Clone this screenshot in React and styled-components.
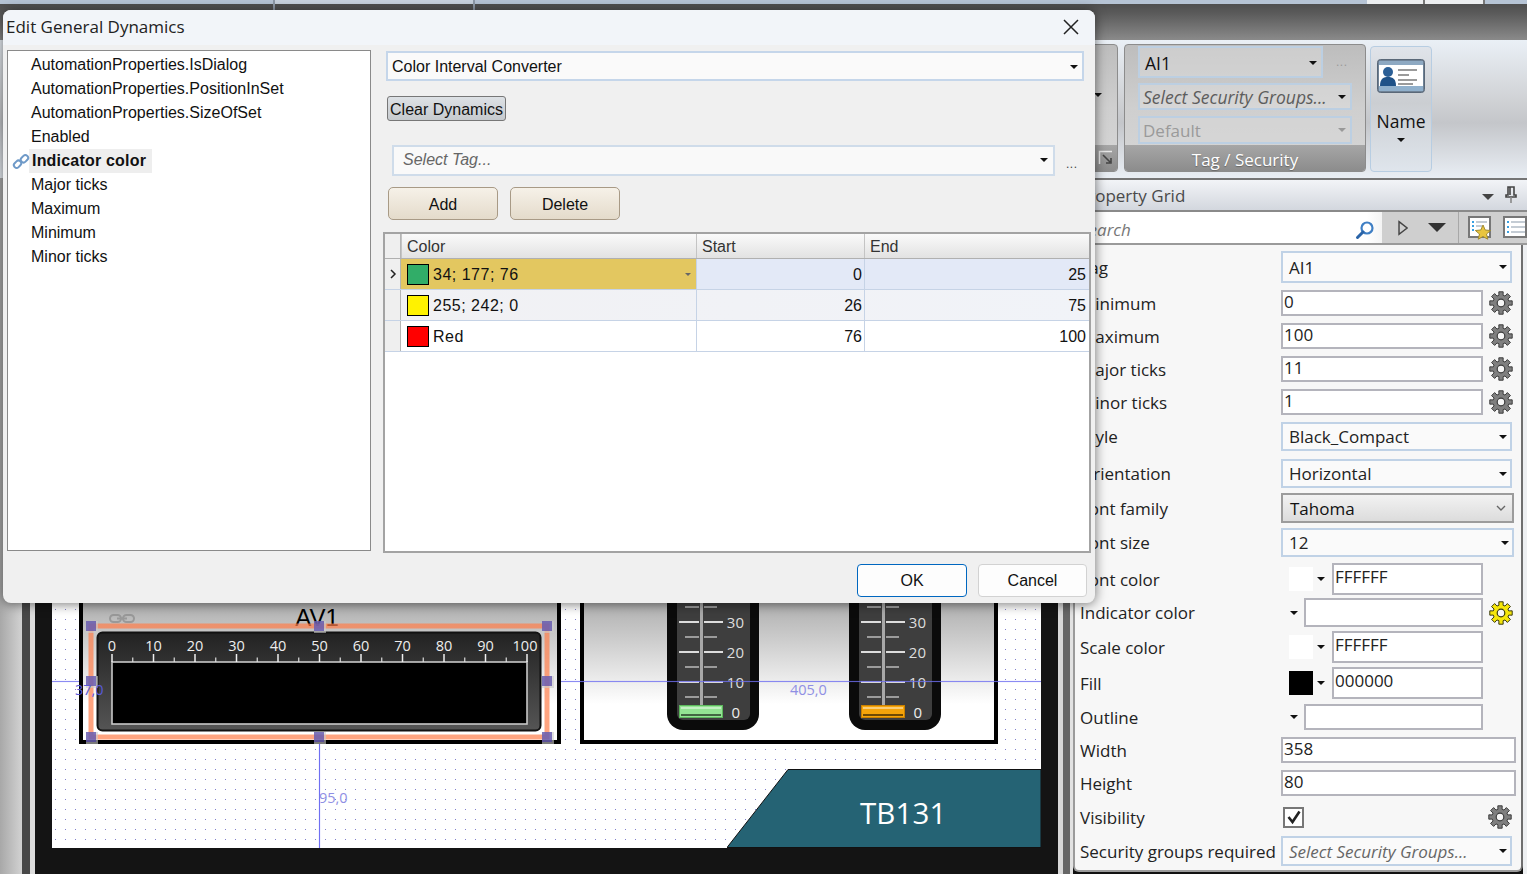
import styled, { createGlobalStyle } from "styled-components";

const UI_FONT = `"Open Sans", "Noto Sans", sans-serif`;
const ARIAL = `"Liberation Sans", Arial, sans-serif`;

const GlobalStyle = createGlobalStyle`
  html, body {
    margin: 0;
    padding: 0;
    background: #111;
    overflow: hidden;
  }
  * {
    box-sizing: border-box;
  }
`;

const Page = styled.div`
  position: relative;
  width: 1527px;
  height: 874px;
  overflow: hidden;
  display: flex;
  flex-direction: column;
  font-family: ${UI_FONT};
  color: #111;
`;

/* top window chrome */
const TopStrip = styled.div`
  height: 4px;
  display: flex;
  background: #b6c4d5;
`;

const TopTab = styled.div`
  width: ${(p) => p.$w}px;
  background: ${(p) => p.$bg || "#b6c4d5"};
  border-right: 2px solid ${(p) => p.$line || "#8d98a6"};
`;

const TitleBand = styled.div`
  height: 36px;
  display: flex;
  background: linear-gradient(#4f4f4f, #5a5a5a 25%, #8a8a8a);
`;

const TitleCell = styled.div`
  width: ${(p) => p.$w}px;
  border-right: 2px solid #8f9aa8;
`;

/* ribbon */
const Ribbon = styled.div`
  height: 138px;
  display: flex;
  align-items: flex-start;
  gap: 6px;
  padding: 4px 0 0 800px;
  background: linear-gradient(#eaf0f6, #cfd1d4 45%, #c4c6ca 60%, #e9eef4 100%);
`;

const GroupBox = styled.div`
  height: 128px;
  width: ${(p) => p.$w}px;
  display: flex;
  flex-direction: column;
  border: 1px solid #8c8c8c;
  border-radius: 4px;
  overflow: hidden;
  background: linear-gradient(#bdbdbd, #cfcfcf 50%, #d6d6d6);
`;

const GroupBody = styled.div`
  flex: 1;
  display: flex;
  flex-direction: column;
  align-items: ${(p) => (p.$end ? "flex-end" : "flex-start")};
  justify-content: ${(p) => (p.$end ? "center" : "flex-start")};
  padding: ${(p) => (p.$end ? "0 15px 0 0" : "1px 0 0 13px")};
`;

const GroupFooter = styled.div`
  height: 26px;
  display: flex;
  align-items: center;
  justify-content: ${(p) => (p.$end ? "flex-end" : "center")};
  padding: ${(p) => (p.$end ? "0 3px 0 0" : "2px 0 0 0")};
  background: linear-gradient(#a6a6a6, #8c8c8c);
  color: #fff;
  font-size: 17px;
  text-shadow: 0 1px 1px #666;
`;

const ComboRow = styled.div`
  display: flex;
  align-items: center;
  gap: 13px;
  margin-bottom: ${(p) => p.$gap || 0}px;
`;

const RibbonCombo = styled.div`
  width: ${(p) => p.$w}px;
  height: ${(p) => p.$h}px;
  display: flex;
  align-items: center;
  justify-content: space-between;
  padding: ${(p) => p.$pt || 0}px 4px 0 ${(p) => p.$pl || 3}px;
  border: 2px solid #bccfe2;
  font-size: ${(p) => (p.$off ? 17 : 17.5)}px;
  font-style: ${(p) => (p.$hint ? "italic" : "normal")};
  color: ${(p) => (p.$off ? "#9a9a9a" : p.$hint ? "#5d5d5d" : "#111")};
  background: ${(p) => (p.$off ? "rgba(215,215,215,.5)" : "rgba(225,225,225,.45)")};
  white-space: nowrap;
`;

const Caret = styled.span`
  flex: none;
  width: 0;
  height: 0;
  border-left: ${(p) => p.$size || 4}px solid transparent;
  border-right: ${(p) => p.$size || 4}px solid transparent;
  border-top: ${(p) => p.$size || 4}px solid ${(p) => p.$color || "#111"};
`;

const Ellipsis = styled.span`
  font-size: 12px;
  line-height: 1;
  color: ${(p) => p.$color || "#444"};
  letter-spacing: 0.5px;
  font-family: ${ARIAL};
`;

const NameButton = styled.div`
  margin: 2px 0 0 -2px;
  width: 62px;
  height: 126px;
  display: flex;
  flex-direction: column;
  align-items: center;
  padding-top: 12px;
  border: 1px solid #b7cde2;
  border-radius: 4px;
  font-size: 17.5px;
  background: linear-gradient(#e0e4ea, #cbced2 45%, #dfe5ec);
`;

const NameLabel = styled.div`
  margin: 12px 0 3px;
  line-height: 28px;
`;

/* work area */
const Workspace = styled.div`
  height: 696px;
  display: flex;
`;

const EditorArea = styled.div`
  width: 1073px;
  display: flex;
`;

const Gutter = styled.div`
  width: 22px;
  background: linear-gradient(90deg, #a8a8a8, #d2d2d2);
`;

const Strip = styled.div`
  width: ${(p) => p.$w}px;
  background: ${(p) => p.$c};
`;

const CanvasFrame = styled.div`
  flex: 1;
  padding: 0 17px 26px;
  background: #141414;
`;

const Canvas = styled.div`
  position: relative;
  height: 100%;
  overflow: hidden;
  background-color: #fff;
  background-image: radial-gradient(circle at 3.5px 1.5px, #8080cc 0.7px, transparent 0.95px);
  background-size: 10px 10px;
`;

const PanelFrame = styled.div`
  position: absolute;
  left: ${(p) => p.$x}px;
  width: ${(p) => p.$w}px;
  top: 362px;
  height: 204px;
  border: 4px solid #000;
  background: linear-gradient(#909090, #b8b8b8 70px, #fff 160px);
`;

const Drawing = styled.svg`
  position: absolute;
  left: ${(p) => p.$x}px;
  top: ${(p) => p.$y}px;
  overflow: visible;
`;

const GuideV = styled.div`
  position: absolute;
  left: 267px;
  top: 400px;
  bottom: 0;
  width: 1px;
  background: #6f6ff2;
  box-shadow: 0 0 1px rgba(110, 110, 255, 0.8);
`;

const GuideH = styled.div`
  position: absolute;
  left: 0;
  right: 0;
  top: 503px;
  height: 1px;
  background: rgba(110, 110, 240, 0.8);
  box-shadow: 0 0 1px rgba(110, 110, 255, 0.6);
`;

const GuideText = styled.span`
  position: absolute;
  left: ${(p) => p.$x}px;
  top: ${(p) => p.$y}px;
  font-size: 14.5px;
  line-height: 18px;
  color: ${(p) => p.$c || "#8f8fe4"};
`;

const Banner = styled.div`
  position: absolute;
  left: 675px;
  right: 0;
  top: 591px;
  height: 79px;
  display: flex;
  align-items: center;
  padding: 7px 0 0 133px;
  color: #fff;
  font-size: 29.5px;
  letter-spacing: 0.1px;
`;

const BannerShape = styled.svg`
  position: absolute;
  inset: 0;
  width: 100%;
  height: 100%;
`;

const BannerLabel = styled.span`
  position: relative;
`;

/* property grid */
const PropertyPanel = styled.div`
  flex: 1;
  display: flex;
  flex-direction: column;
  min-width: 0;
`;

const PropertyHeader = styled.div`
  height: 34px;
  display: flex;
  align-items: center;
  justify-content: space-between;
  padding: 0 10px 0 5px;
  border-top: 2px solid #757575;
  border-bottom: 2px solid #8a8a8a;
  font-size: 17px;
  color: #4a4a4a;
  background: linear-gradient(#f2f4f7, #d3d7de);
`;

const HeaderIcons = styled.div`
  display: flex;
  align-items: center;
  gap: 11px;
`;

const HeaderCaret = styled(Caret)`
  margin-top: 4px;
`;

const SearchRow = styled.div`
  height: 33px;
  display: flex;
  border-bottom: 2px solid #9a9a9a;
  background: #cfcfcf;
`;

const SearchBox = styled.div`
  width: 309px;
  display: flex;
  align-items: center;
  justify-content: space-between;
  padding: 4px 7px 0 7px;
  background: linear-gradient(90deg, #fff, #fff 95%, #f4f4f4);
  font-size: 17px;
  font-style: italic;
  color: #777;
`;

const SearchTools = styled.div`
  flex: 1;
  display: flex;
  align-items: center;
  padding-left: 16px;
  overflow: hidden;
`;

const ToolCaret = styled(Caret)`
  margin-left: 20px;
`;

const ToolSeparator = styled.div`
  width: 1px;
  height: 100%;
  margin: 0 9px 0 12px;
  background: #a8a8a8;
`;

const ToolIcon = styled.div`
  flex: none;
  display: flex;
  margin-right: ${(p) => p.$mr || 0}px;
`;

const PropertyBody = styled.div`
  flex: 1;
  display: flex;
`;

const PropertyList = styled.div`
  flex: 1;
  margin-bottom: 2px;
  padding: 6px 7px 0 5px;
  border: solid #9b9b9b;
  border-width: 0 2px 2px 2px;
  border-right-color: #6f6f6f;
  border-radius: 0 0 6px 6px;
  background: #f7f7f7;
`;

const ScrollEdge = styled.div`
  width: 4px;
  background: #eef0f2;
`;

const Row = styled.div`
  height: ${(p) => p.$h}px;
  margin-bottom: ${(p) => p.$gap}px;
  display: grid;
  grid-template-columns: 201px 1fr;
  align-items: center;
`;

const RowLabel = styled.div`
  font-size: 17px;
  color: #222;
  white-space: nowrap;
`;

const Value = styled.div`
  height: 100%;
  display: flex;
  align-items: center;
  min-width: 0;
`;

const Input = styled.div`
  flex: none;
  width: ${(p) => p.$w || 235}px;
  margin-left: ${(p) => p.$ml || 0}px;
  height: 100%;
  padding: 0 1px;
  border: 2px solid #b4b4bc;
  background: #fff;
  font-size: 17px;
  line-height: ${(p) => p.$lh || 20}px;
  color: #222;
`;

const Combo = styled.div`
  width: ${(p) => p.$w || 231}px;
  height: 100%;
  display: flex;
  align-items: center;
  justify-content: space-between;
  padding: 0 3px 0 6px;
  border: 2px solid #c0d2e6;
  background: #fafafa;
  font-size: 17px;
  font-style: ${(p) => (p.$hint ? "italic" : "normal")};
  color: ${(p) => (p.$hint ? "#666" : "#222")};
  white-space: nowrap;
`;

const FontCombo = styled(Combo)`
  width: 235px;
  padding-left: 7px;
  padding-right: 6px;
  border-color: #9c9c9c;
  background: linear-gradient(#f2f2f2, #dcdcdc);
  color: #111;
`;

const Swatch = styled.div`
  flex: none;
  width: 24px;
  height: 24px;
  margin: 0 2px 0 8px;
  background: ${(p) => p.$c};
`;

const GearSlot = styled.div`
  flex: none;
  width: 31px;
  display: flex;
  justify-content: flex-end;
  padding-right: 1px;
`;

const CaretSlot = styled.div`
  flex: none;
  width: 12px;
  margin-right: ${(p) => p.$mr || 0}px;
  margin-left: ${(p) => p.$ml || 0}px;
  display: flex;
  justify-content: center;
`;

const Check = styled.div`
  flex: none;
  width: 21px;
  height: 21px;
  margin-left: 2px;
  margin-right: 178px;
  display: flex;
  align-items: center;
  justify-content: center;
  border: 2px solid #777;
  background: #fff;
`;

/* dialog */
const Dialog = styled.div`
  position: absolute;
  left: 3px;
  top: 10px;
  width: 1092px;
  height: 593px;
  display: flex;
  flex-direction: column;
  overflow: hidden;
  border-radius: 8px;
  background: #f0f0f0;
  box-shadow: 0 1px 12px rgba(0, 0, 0, 0.55);
`;

const DialogTitle = styled.div`
  height: 35px;
  flex: none;
  display: flex;
  align-items: center;
  justify-content: space-between;
  padding: 0 15px 2px 3px;
  font-size: 17px;
  color: #222;
  background: #f2f5f9;
`;

const DialogBody = styled.div`
  height: 508px;
  flex: none;
  display: flex;
  gap: 12px;
  padding: 5px 4px 0;
`;

const PropertyNames = styled.div`
  width: 364px;
  height: 501px;
  flex: none;
  padding: 2px 0 0 2px;
  border: 1px solid #8a8a8a;
  background: #fff;
`;

const NameRow = styled.div`
  position: relative;
  height: 24px;
  padding-left: 21px;
  display: flex;
  align-items: center;
  font-family: ${ARIAL};
  font-size: 16px;
  color: #111;
`;

const NameText = styled.span`
  padding: 0 6px 0 ${(p) => (p.$on ? "3px" : "0")};
  margin-left: ${(p) => (p.$on ? "-2px" : "0")};
  line-height: 24px;
  font-weight: ${(p) => (p.$on ? 700 : 400)};
  letter-spacing: ${(p) => (p.$on ? "0.2px" : "0")};
  background: ${(p) => (p.$on ? "#eeeeee" : "transparent")};
`;

const LinkMark = styled.svg`
  position: absolute;
  left: 2px;
  top: 4px;
`;

const EditorPane = styled.div`
  flex: 1;
  min-width: 0;
  display: flex;
  flex-direction: column;
  align-items: flex-start;
  font-family: ${ARIAL};
  font-size: 16px;
`;

const ConverterCombo = styled.div`
  width: 698px;
  height: 30px;
  margin: 1px 0 0 3px;
  padding: 2px 4px 0 4px;
  display: flex;
  align-items: center;
  justify-content: space-between;
  border: 2px solid #c5d6ea;
  background: #fafafa;
`;

const ClearButton = styled.button`
  width: 119px;
  height: 25px;
  margin: 15px 0 0 4px;
  padding: 2px 0 0;
  border: 1px solid #777;
  border-radius: 3px;
  font: inherit;
  color: #111;
  background: linear-gradient(#dde1e5, #c6cace);
`;

const TagRow = styled.div`
  display: flex;
  align-items: center;
  margin: 24px 0 0 9px;
`;

const TagCombo = styled.div`
  width: 663px;
  height: 31px;
  padding: 0 5px 2px 9px;
  display: flex;
  align-items: center;
  justify-content: space-between;
  border: 2px solid #cfdcea;
  background: #f9f9f9;
  font-style: italic;
  color: #666;
`;

const TagDots = styled(Ellipsis)`
  margin: 6px 0 0 11px;
`;

const ActionRow = styled.div`
  display: flex;
  gap: 12px;
  margin: 11px 0 0 5px;
`;

const ActionButton = styled.button`
  width: 110px;
  height: 33px;
  padding: 2px 0 0;
  border: 1px solid #a89a86;
  border-radius: 5px;
  font: inherit;
  color: #111;
  background: linear-gradient(#f6f1e8, #e4dbcb);
`;

const Table = styled.div`
  width: 708px;
  height: 321px;
  margin-top: 12px;
  border: 2px solid #a3a3a3;
  background: #fff;
`;

const GridRow = styled.div`
  height: ${(p) => p.$h}px;
  display: grid;
  grid-template-columns: 16px 295px 168px 1fr;
  border-bottom: 1px solid #c6d3e6;
  background: ${(p) => p.$bg || "#fff"};
`;

const HeadRow = styled(GridRow)`
  border-bottom-color: #b0b0b0;
  background: linear-gradient(#fafafa, #e2e2e2);
`;

const HeadCell = styled.div`
  display: flex;
  align-items: center;
  padding: 2px 0 0 5px;
  border-left: 1px solid #c4c4c4;
  color: #333;
`;

const RowMarker = styled.div`
  display: flex;
  align-items: center;
  justify-content: center;
  border-right: 1px solid #b5b5b5;
  background: #efefef;
`;

const ColorCell = styled.div`
  display: flex;
  align-items: center;
  padding: 0 5px 0 6px;
  background: ${(p) => (p.$on ? "#e3c760" : "transparent")};
`;

const ColorChip = styled.div`
  flex: none;
  width: 22px;
  height: 21px;
  margin-right: 4px;
  border: 1px solid #000;
  background: ${(p) => p.$c};
`;

const ColorName = styled.span`
  flex: 1;
  padding-top: 2px;
  letter-spacing: 0.5px;
`;

const NumberCell = styled.div`
  display: flex;
  align-items: center;
  justify-content: flex-end;
  padding: 2px ${(p) => p.$pr}px 0 0;
  border-left: 1px solid #c6d3e6;
  background: ${(p) => (p.$on ? "#e3e9f7" : "transparent")};
`;

const DialogFooter = styled.div`
  display: flex;
  justify-content: flex-end;
  gap: 11px;
  padding: 11px 8px 0 0;
  font-family: ${ARIAL};
`;

const FooterButton = styled.button`
  width: ${(p) => p.$w}px;
  height: 33px;
  padding: 0;
  border: 1px solid ${(p) => (p.$primary ? "#0067c0" : "#d2d2d2")};
  border-radius: 4px;
  background: #fdfdfd;
  font: inherit;
  font-size: 16px;
  color: #111;
`;

/* drawings */

// eight square teeth round a ring
const gearOutline = () => {
  const point = (r, deg) => {
    const a = (deg * Math.PI) / 180;
    return `${(12 + r * Math.sin(a)).toFixed(2)} ${(12 - r * Math.cos(a)).toFixed(2)}`;
  };
  let d = "";
  for (let i = 0; i < 8; i++) {
    const c = i * 45;
    const pts = [point(8, c - 15), point(11.4, c - 11), point(11.4, c + 11), point(8, c + 15)];
    d += `${i === 0 ? "M" : "L"}${pts.join(" L")} `;
  }
  return `${d}Z`;
};

const GEAR_PATH = gearOutline();

const Gear = ({ fill = "#7f7f7f", edge = "#3d3d3d" }) => (
  <svg width="24" height="24" viewBox="0 0 24 24">
    <path d={GEAR_PATH} fill={fill} stroke={edge} strokeWidth="1" strokeLinejoin="round" />
    <circle cx="12" cy="12" r="3.8" fill="#f7f7f7" stroke={edge} strokeWidth="1.2" />
  </svg>
);

const CloseIcon = () => (
  <svg width="18" height="18" viewBox="0 0 18 18">
    <path d="M2 2 L16 16 M16 2 L2 16" stroke="#222" strokeWidth="1.5" fill="none" />
  </svg>
);

const LinkIcon = () => (
  <LinkMark width="18" height="18" viewBox="0 0 18 18">
    <g fill="none" stroke="#6f9ac8" strokeWidth="2">
      <rect x="1.5" y="8.5" width="8" height="5.5" rx="2.7" transform="rotate(-45 5.5 11.2)" />
      <rect x="8.5" y="3" width="8" height="5.5" rx="2.7" transform="rotate(-45 12.5 5.8)" />
    </g>
  </LinkMark>
);

const Launcher = () => (
  <svg width="16" height="16" viewBox="0 0 16 16">
    <path d="M1.5 14 V1.5 H14" fill="none" stroke="#e8e8e8" strokeWidth="1.5" />
    <path d="M5 5 L12 12 M8 13 H13 V8" fill="none" stroke="#444" strokeWidth="1.6" />
  </svg>
);

const CardIcon = () => (
  <svg width="48" height="36" viewBox="0 0 48 36">
    <rect x="0.5" y="0.5" width="47" height="33" rx="3" fill="#6f8296" stroke="#5a6878" />
    <rect x="2" y="2" width="44" height="4" fill="#8ea9c2" />
    <rect x="2" y="6" width="44" height="21" fill="#fff" />
    <rect x="2" y="27" width="44" height="5" fill="#90b0cc" />
    <circle cx="11" cy="13" r="5" fill="#2b5f96" />
    <path d="M3 27 C3 19 7 18 11 18 C16 18 19 20 19 27 Z" fill="#1f5288" />
    <path d="M21 11 H40 M21 16 H32 M21 21 H40 M21 25 H36" stroke="#7a7a7a" strokeWidth="1.4" />
  </svg>
);

const SearchGlass = () => (
  <svg width="20" height="20" viewBox="0 0 20 20">
    <circle cx="12" cy="8" r="5.5" fill="#fff" stroke="#3f7fc4" strokeWidth="2.2" />
    <path d="M8 12 L2.5 17.5" stroke="#2a64a8" strokeWidth="3" strokeLinecap="round" />
  </svg>
);

const PinIcon = () => (
  <svg width="12" height="18" viewBox="0 0 12 18">
    <path d="M3 1 H9 V9 H11 V11 H1 V9 H3 Z M5 1 V9" fill="none" stroke="#444" strokeWidth="1.6" />
    <path d="M6 11 V17" stroke="#888" strokeWidth="1.6" />
  </svg>
);

const PlayOutline = () => (
  <svg width="12" height="18" viewBox="0 0 12 18">
    <path d="M1.2 1.5 L10.8 9 L1.2 16.5 Z" fill="none" stroke="#444" strokeWidth="1.7" />
  </svg>
);

const FavIcon = () => (
  <svg width="24" height="24" viewBox="0 0 24 24">
    <rect x="1" y="1" width="21" height="20" fill="#fff" stroke="#777" strokeWidth="2" />
    <path d="M4 6 H6 M4 10 H6 M4 14 H6" stroke="#3aa0e0" strokeWidth="2" />
    <path d="M8 6 H19 M8 10 H14" stroke="#c4ccd4" strokeWidth="2" />
    <path d="M15 9 L17.2 14 L22.6 14.5 L18.5 18 L19.8 23.2 L15 20.5 L10.2 23.2 L11.5 18 L7.4 14.5 L12.8 14 Z" fill="#e9c53e" stroke="#a08a30" strokeWidth="1" />
  </svg>
);

const ListIcon = () => (
  <svg width="24" height="24" viewBox="0 0 24 24">
    <rect x="1" y="1" width="22" height="20" fill="#fff" stroke="#777" strokeWidth="2" />
    <path d="M4 6 H6 M4 11 H6 M4 16 H6" stroke="#3aa0e0" strokeWidth="2" />
    <path d="M8 6 H22 M8 11 H22 M8 16 H22" stroke="#c4ccd4" strokeWidth="2" />
  </svg>
);

const CheckMark = () => (
  <svg width="16" height="16" viewBox="0 0 16 16">
    <path d="M2.5 8 L6.5 13 L13.5 2.5" fill="none" stroke="#222" strokeWidth="2.6" />
  </svg>
);

const HANDLES = [
  [91, 626], [319, 626], [547, 626],
  [91, 681], [547, 681],
  [91, 737], [319, 737], [547, 737],
];

const SCALE = Array.from({ length: 11 }, (_, i) => i * 10);

// horizontal gauge with its selection frame, coordinates are page pixels
const HorizontalGauge = () => (
  <Drawing $x={18} $y={422} width="500" height="150" viewBox="70 600 500 150">
    <text x="317" y="626" textAnchor="middle" fontFamily={ARIAL} fontSize="24" fill="#000">AV1</text>
    <g fill="none" stroke="#999" strokeWidth="2">
      <rect x="110" y="615" width="11" height="7" rx="3.5" />
      <rect x="123" y="615" width="11" height="7" rx="3.5" />
      <path d="M117 618.5 H127" />
    </g>
    <defs>
      <linearGradient id="gaugeFace" x1="0" y1="0" x2="0" y2="1">
        <stop offset="0" stopColor="#222" />
        <stop offset="1" stopColor="#555" />
      </linearGradient>
    </defs>
    <rect x="97.5" y="632.5" width="443" height="98" rx="5" fill="url(#gaugeFace)" stroke="#111" strokeWidth="2" />
    <rect x="112" y="662" width="415" height="62" fill="#000" stroke="#c8c8c8" strokeWidth="1.6" />
    {SCALE.map((v, i) => {
      const x = 112 + i * 41.5;
      return (
        <g key={v}>
          <path d={`M${x} 654 V662`} stroke="#eee" strokeWidth="1.5" />
          {i < 10 && <path d={`M${x + 20.75} 657.5 V662`} stroke="#ddd" strokeWidth="1.2" />}
          <text x={i === 10 ? x - 2 : x} y="651" textAnchor="middle" fontFamily={UI_FONT} fontSize="14.5" fill="#eee">{v}</text>
        </g>
      );
    })}
    <rect x="91" y="626" width="456" height="111" fill="none" stroke="#ff7d4a" strokeOpacity="0.7" strokeWidth="5" />
    {HANDLES.map(([x, y]) => (
      <g key={`${x}-${y}`}>
        <rect x={x - 5} y={y - 5} width="12" height="12" fill="#ccc" fillOpacity="0.6" />
        <rect x={x - 5} y={y - 5} width="10" height="10" fill="#4a3aa8" fillOpacity="0.65" />
      </g>
    ))}
  </Drawing>
);

const THERMO_MAJOR = [[622, "30"], [652, "20"], [682, "10"]];
const THERMO_MINOR = [607, 637, 667, 697];

// vertical bar gauge, drawn at the first gauge's page coordinates and moved by $x
const Thermometer = ({ left, fill, edge }) => (
  <Drawing $x={left} $y={422} width="110" height="140" viewBox="660 600 110 140">
    <path d="M667 590 H759 V714 a16 16 0 0 1 -16 16 H683 a16 16 0 0 1 -16 -16 Z" fill="#0b0b0b" />
    <path d="M677 590 H750 V714 a6 6 0 0 1 -6 6 H683 a6 6 0 0 1 -6 -6 Z" fill="#3e3e3e" />
    <rect x="700" y="590" width="3" height="116" fill="#a8a8a8" />
    {THERMO_MINOR.map((y) => (
      <path key={y} d={`M685 ${y} H699 M704 ${y} H717`} stroke="#bbb" strokeWidth="1.5" />
    ))}
    {THERMO_MAJOR.map(([y, label]) => (
      <g key={label}>
        <path d={`M679 ${y} H699 M704 ${y} H723`} stroke="#ddd" strokeWidth="2" />
        <text x="744" y={y + 6} textAnchor="end" fontFamily={UI_FONT} fontSize="15" fill="#ddd">{label}</text>
      </g>
    ))}
    <text x="740" y="718" textAnchor="end" fontFamily={UI_FONT} fontSize="15" fill="#eee">0</text>
    <rect x="679.5" y="705.5" width="43" height="12" fill={fill} stroke={edge} />
    <rect x="681" y="707" width="40" height="2" fill="#fff" fillOpacity="0.45" />
    <rect x="681" y="714" width="40" height="2" fill="#000" fillOpacity="0.55" />
  </Drawing>
);

const ROWS = [
  { label: "Tag", h: 32, gap: 7, kind: "combo", text: "AI1" },
  { label: "Minimum", h: 26, gap: 7, kind: "gear", text: "0" },
  { label: "Maximum", h: 26, gap: 7, kind: "gear", text: "100" },
  { label: "Major ticks", h: 26, gap: 7, kind: "gear", text: "11" },
  { label: "Minor ticks", h: 26, gap: 7, kind: "gear", text: "1" },
  { label: "Style", h: 29, gap: 8, kind: "combo", text: "Black_Compact" },
  { label: "Orientation", h: 29, gap: 5, kind: "combo", text: "Horizontal" },
  { label: "Font family", h: 30, gap: 5, kind: "font", text: "Tahoma" },
  { label: "Font size", h: 29, gap: 6, kind: "wide", text: "12" },
  { label: "Font color", h: 32, gap: 3, kind: "color", text: "FFFFFF", color: "#fff" },
  { label: "Indicator color", h: 29, gap: 4, kind: "nocolor", gear: "#f5e60a" },
  { label: "Scale color", h: 32, gap: 4, kind: "color", text: "FFFFFF", color: "#fff" },
  { label: "Fill", h: 32, gap: 5, kind: "color", text: "000000", color: "#000" },
  { label: "Outline", h: 26, gap: 7, kind: "nocolor" },
  { label: "Width", h: 26, gap: 7, kind: "text", text: "358" },
  { label: "Height", h: 26, gap: 7, kind: "text", text: "80" },
  { label: "Visibility", h: 28, gap: 5, kind: "check" },
  { label: "Security groups required", h: 30, gap: 0, kind: "hint", text: "Select Security Groups..." },
];

const RowValue = ({ row }) => {
  switch (row.kind) {
    case "combo":
    case "wide":
      return (
        <Combo $w={row.kind === "wide" ? 234 : 231}>
          {row.text}
          <Caret />
        </Combo>
      );
    case "font":
      return (
        <FontCombo>
          {row.text}
          <svg width="10" height="7" viewBox="0 0 10 7">
            <path d="M1 1 L5 5 L9 1" fill="none" stroke="#666" strokeWidth="1.4" />
          </svg>
        </FontCombo>
      );
    case "gear":
      return (
        <>
          <Input $w={202}>{row.text}</Input>
          <GearSlot><Gear /></GearSlot>
        </>
      );
    case "color":
      return (
        <>
          <Swatch $c={row.color} />
          <CaretSlot><Caret /></CaretSlot>
          <Input $w={151} $ml={5} $lh={23}>{row.text}</Input>
        </>
      );
    case "nocolor":
      return (
        <>
          <CaretSlot $ml={7} $mr={4}><Caret /></CaretSlot>
          <Input $w={179} />
          {row.gear && <GearSlot><Gear fill={row.gear} edge="#3a3a10" /></GearSlot>}
        </>
      );
    case "text":
      return <Input>{row.text}</Input>;
    case "check":
      return (
        <>
          <Check><CheckMark /></Check>
          <GearSlot><Gear /></GearSlot>
        </>
      );
    default:
      return (
        <Combo $hint>
          {row.text}
          <Caret />
        </Combo>
      );
  }
};

const DYNAMICS = [
  "AutomationProperties.IsDialog",
  "AutomationProperties.PositionInSet",
  "AutomationProperties.SizeOfSet",
  "Enabled",
  "Indicator color",
  "Major ticks",
  "Maximum",
  "Minimum",
  "Minor ticks",
];

const INTERVALS = [
  { name: "34; 177; 76", chip: "#31ad68", start: 0, end: 25, on: true },
  { name: "255; 242; 0", chip: "#fff200", start: 26, end: 75, bg: "linear-gradient(90deg,#f1f1f4,#f1f3f8)" },
  { name: "Red", chip: "#ff0000", start: 76, end: 100 },
];

const App = () => {
  return (
    <Page>
      <GlobalStyle />
      <TopStrip>
        <TopTab $w={275} />
        <TopTab $w={200} $bg="#c9d3df" />
        <TopTab $w={892} $line="#b6c4d5" />
        <TopTab $w={58} $bg="#eceef0" $line="#777" />
        <TopTab $w={60} $bg="#eceef0" $line="#777" />
      </TopStrip>
      <TitleBand>
        <TitleCell $w={275} />
        <TitleCell $w={200} />
      </TitleBand>

      <Ribbon>
        <GroupBox $w={318}>
          <GroupBody $end>
            <Caret />
          </GroupBody>
          <GroupFooter $end>
            <Launcher />
          </GroupFooter>
        </GroupBox>
        <GroupBox $w={242}>
          <GroupBody>
            <ComboRow $gap={5}>
              <RibbonCombo $w={185} $h={32} $pt={2} $pl={5}>
                AI1
                <Caret />
              </RibbonCombo>
              <Ellipsis $color="#999">...</Ellipsis>
            </ComboRow>
            <ComboRow $gap={6}>
              <RibbonCombo $w={214} $h={27} $hint>
                Select Security Groups...
                <Caret />
              </RibbonCombo>
            </ComboRow>
            <ComboRow>
              <RibbonCombo $w={214} $h={28} $off>
                Default
                <Caret $color="#999" />
              </RibbonCombo>
            </ComboRow>
          </GroupBody>
          <GroupFooter>Tag / Security</GroupFooter>
        </GroupBox>
        <NameButton>
          <CardIcon />
          <NameLabel>Name</NameLabel>
          <Caret />
        </NameButton>
      </Ribbon>

      <Workspace>
        <EditorArea>
          <Gutter />
          <Strip $w={8} $c="#484848" />
          <Strip $w={5} $c="#dcdcdc" />
          <CanvasFrame>
            <Canvas>
              <PanelFrame $x={528} $w={418} />
              <Thermometer left={608} fill="#93e493" edge="#5cb85c" />
              <Thermometer left={790} fill="#f5a40a" edge="#c98000" />
              <GuideH />
              <GuideV />
              <PanelFrame $x={27} $w={482} />
              <HorizontalGauge />
              <Banner>
                <BannerShape viewBox="0 0 314 79" preserveAspectRatio="none">
                  <polygon points="0,78.5 61,0.5 314,0.5 314,78.5" fill="#256374" stroke="#111" strokeWidth="1" />
                </BannerShape>
                <BannerLabel>TB131</BannerLabel>
              </Banner>
              <GuideText $x={23} $y={503} $c="#5a5ad8">37,0</GuideText>
              <GuideText $x={267} $y={611}>95,0</GuideText>
              <GuideText $x={738} $y={503}>405,0</GuideText>
            </Canvas>
          </CanvasFrame>
          <Strip $w={5} $c="#d8d8d8" />
          <Strip $w={7} $c="#666" />
          <Strip $w={3} $c="#e2e2e2" />
        </EditorArea>

        <PropertyPanel>
          <PropertyHeader>
            Property Grid
            <HeaderIcons>
              <HeaderCaret $size={6} $color="#444" />
              <PinIcon />
            </HeaderIcons>
          </PropertyHeader>
          <SearchRow>
            <SearchBox>
              Search
              <SearchGlass />
            </SearchBox>
            <SearchTools>
              <PlayOutline />
              <ToolCaret $size={9} $color="#333" />
              <ToolSeparator />
              <ToolIcon $mr={11}><FavIcon /></ToolIcon>
              <ToolIcon><ListIcon /></ToolIcon>
            </SearchTools>
          </SearchRow>
          <PropertyBody>
            <PropertyList>
              {ROWS.map((row) => (
                <Row key={row.label} $h={row.h} $gap={row.gap}>
                  <RowLabel>{row.label}</RowLabel>
                  <Value>
                    <RowValue row={row} />
                  </Value>
                </Row>
              ))}
            </PropertyList>
            <ScrollEdge />
          </PropertyBody>
        </PropertyPanel>
      </Workspace>

      <Dialog>
        <DialogTitle>
          Edit General Dynamics
          <CloseIcon />
        </DialogTitle>
        <DialogBody>
          <PropertyNames>
            {DYNAMICS.map((name) => {
              const on = name === "Indicator color";
              return (
                <NameRow key={name}>
                  {on && <LinkIcon />}
                  <NameText $on={on}>{name}</NameText>
                </NameRow>
              );
            })}
          </PropertyNames>
          <EditorPane>
            <ConverterCombo>
              Color Interval Converter
              <Caret />
            </ConverterCombo>
            <ClearButton>Clear Dynamics</ClearButton>
            <TagRow>
              <TagCombo>
                Select Tag...
                <Caret />
              </TagCombo>
              <TagDots>...</TagDots>
            </TagRow>
            <ActionRow>
              <ActionButton>Add</ActionButton>
              <ActionButton>Delete</ActionButton>
            </ActionRow>
            <Table>
              <HeadRow $h={25}>
                <RowMarker />
                <HeadCell>Color</HeadCell>
                <HeadCell>Start</HeadCell>
                <HeadCell>End</HeadCell>
              </HeadRow>
              {INTERVALS.map((row) => (
                <GridRow key={row.name} $h={31} $bg={row.bg}>
                  <RowMarker>
                    {row.on && (
                      <svg width="8" height="10" viewBox="0 0 8 10">
                        <path d="M2 1 L6 5 L2 9" fill="none" stroke="#222" strokeWidth="1.5" />
                      </svg>
                    )}
                  </RowMarker>
                  <ColorCell $on={row.on}>
                    <ColorChip $c={row.chip} />
                    <ColorName>{row.name}</ColorName>
                    {row.on && <Caret $size={3} $color="#666" />}
                  </ColorCell>
                  <NumberCell $on={row.on} $pr={2}>{row.start}</NumberCell>
                  <NumberCell $on={row.on} $pr={3}>{row.end}</NumberCell>
                </GridRow>
              ))}
            </Table>
          </EditorPane>
        </DialogBody>
        <DialogFooter>
          <FooterButton $w={110} $primary>OK</FooterButton>
          <FooterButton $w={109}>Cancel</FooterButton>
        </DialogFooter>
      </Dialog>
    </Page>
  );
};

export default App;
